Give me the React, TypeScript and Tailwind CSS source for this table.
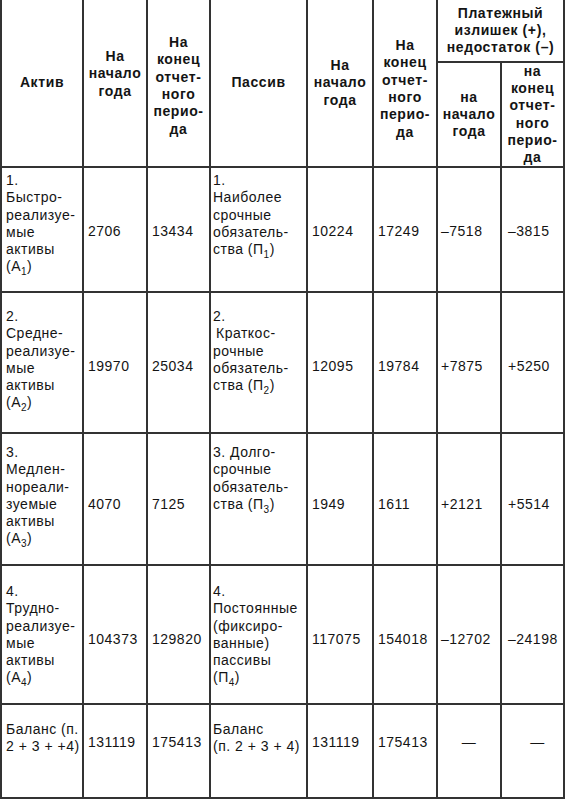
import type { ReactNode } from "react";

const Sub = ({ n }: { n: number }) => <sub className="text-[10px] -bottom-[4px]">{n}</sub>;

interface Row {
  textPt: string;
  numPt: string;
  asset: ReactNode;
  liability: ReactNode;
  nums: string[];
}

const rows: Row[] = [
  {
    textPt: "pt-[4px]",
    numPt: "pt-[55px]",
    asset: (
      <>
        1.<br />Быстро-<br />реализуе-<br />мые<br />активы<br />(А<Sub n={1} />)
      </>
    ),
    liability: (
      <>
        1.<br />Наиболее<br />срочные<br />обязатель-<br />ства (П<Sub n={1} />)
      </>
    ),
    nums: ["2706", "13434", "10224", "17249", "–7518", "–3815"],
  },
  {
    textPt: "pt-[15px]",
    numPt: "pt-[65px]",
    asset: (
      <>
        2.<br />Средне-<br />реализуе-<br />мые<br />активы<br />(А<Sub n={2} />)
      </>
    ),
    liability: (
      <>
        2.<br />
        <span className="pl-[3px]">Краткос-</span>
        <br />рочные<br />обязатель-<br />ства (П<Sub n={2} />)
      </>
    ),
    nums: ["19970", "25034", "12095", "19784", "+7875", "+5250"],
  },
  {
    textPt: "pt-[10px]",
    numPt: "pt-[62px]",
    asset: (
      <>
        3.<br />Медлен-<br />нореали-<br />зуемые<br />активы<br />(А<Sub n={3} />)
      </>
    ),
    liability: (
      <>
        3. Долго-<br />срочные<br />обязатель-<br />ства (П<Sub n={3} />)
      </>
    ),
    nums: ["4070", "7125", "1949", "1611", "+2121", "+5514"],
  },
  {
    textPt: "pt-[17px]",
    numPt: "pt-[65px]",
    asset: (
      <>
        4.<br />Трудно-<br />реализуе-<br />мые<br />активы<br />(А<Sub n={4} />)
      </>
    ),
    liability: (
      <>
        4.<br />Постоянные<br />(фиксиро-<br />ванные)<br />пассивы<br />(П<Sub n={4} />)
      </>
    ),
    nums: ["104373", "129820", "117075", "154018", "–12702", "–24198"],
  },
  {
    textPt: "pt-[16px]",
    numPt: "pt-[29px]",
    asset: (
      <>
        Баланс (п.<br />2 + 3 + +4)
      </>
    ),
    liability: (
      <>
        Баланс<br />(п. 2 + 3 + 4)
      </>
    ),
    nums: ["131119", "175413", "131119", "175413", "—", "—"],
  },
];

const cell = "border-r-2 border-b-2 border-[#333]";
const head = `${cell} flex items-center justify-center text-center font-bold tracking-[0.6px] row-span-2`;
const sub = `${cell} flex items-center justify-center text-center font-bold tracking-[0.6px]`;

export default function App() {
  return (
    <div
      className="w-[565px] h-[800px] bg-white text-[#141414] text-[14px] leading-[17.3px] tracking-[0.5px]"
      style={{ fontFamily: '"Liberation Sans", Arial, sans-serif' }}
    >
      <div className="border-l-2 border-[#333] grid grid-cols-[82px_64px_63px_97px_66px_64px_64px_63px] grid-rows-[63px_105px_125px_141px_132px_139px_94px] whitespace-nowrap">
        <div className={head}>Актив</div>
        <div className={`${head} pb-[18px]`}>
          На<br />начало<br />года
        </div>
        <div className={`${head} pt-[6px]`}>
          На<br />конец<br />отчет-<br />ного<br />перио-<br />да
        </div>
        <div className={head}>Пассив</div>
        <div className={head}>
          На<br />начало<br />года
        </div>
        <div className={`${head} pt-[12px]`}>
          На<br />конец<br />отчет-<br />ного<br />перио-<br />да
        </div>
        <div className={`${sub} col-span-2`}>
          Платежный<br />излишек (+),<br />недостаток (–)
        </div>
        <div className={sub}>
          на<br />начало<br />года
        </div>
        <div className={sub}>
          на<br />конец<br />отчет-<br />ного<br />перио-<br />да
        </div>

        {rows.map((r, i) => (
          <div key={i} className="contents">
            <div className={`${cell} pl-[4px] ${r.textPt}`}>{r.asset}</div>
            <div className={`${cell} pl-[4px] ${r.numPt}`}>{r.nums[0]}</div>
            <div className={`${cell} pl-[4px] ${r.numPt}`}>{r.nums[1]}</div>
            <div className={`${cell} pl-[2px] ${r.textPt}`}>{r.liability}</div>
            <div className={`${cell} pl-[4px] ${r.numPt}`}>{r.nums[2]}</div>
            <div className={`${cell} pl-[4px] ${r.numPt}`}>{r.nums[3]}</div>
            {r.nums[4] === "—" ? (
              <>
                <div className={`${cell} text-center ${r.numPt}`}>—</div>
                <div className={`${cell} text-center pl-[10px] ${r.numPt}`}>—</div>
              </>
            ) : (
              <>
                <div className={`${cell} pl-[3px] ${r.numPt}`}>{r.nums[4]}</div>
                <div className={`${cell} pl-[6px] ${r.numPt}`}>{r.nums[5]}</div>
              </>
            )}
          </div>
        ))}
      </div>
    </div>
  );
}
